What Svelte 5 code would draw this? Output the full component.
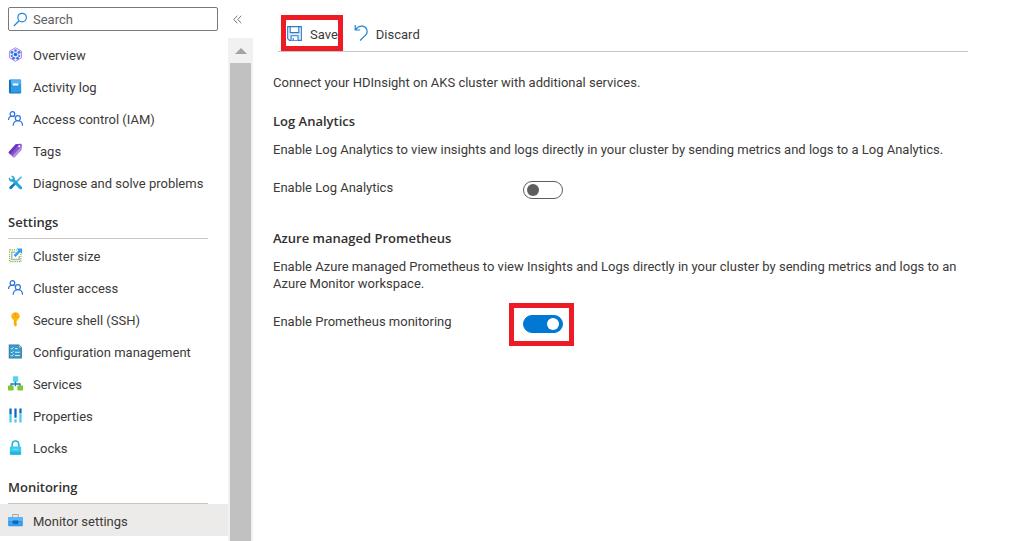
<script>
  const groups = [
    {
      title: '',
      items: [
        { label: 'Overview', icon: 'overview' },
        { label: 'Activity log', icon: 'log' },
        { label: 'Access control (IAM)', icon: 'people' },
        { label: 'Tags', icon: 'tag' },
        { label: 'Diagnose and solve problems', icon: 'tools' },
      ],
    },
    {
      title: 'Settings',
      items: [
        { label: 'Cluster size', icon: 'resize' },
        { label: 'Cluster access', icon: 'people' },
        { label: 'Secure shell (SSH)', icon: 'key' },
        { label: 'Configuration management', icon: 'config' },
        { label: 'Services', icon: 'services' },
        { label: 'Properties', icon: 'properties' },
        { label: 'Locks', icon: 'lock' },
      ],
    },
    {
      title: 'Monitoring',
      items: [{ label: 'Monitor settings', icon: 'toolbox' }],
    },
  ];

  let selected = $state('Monitor settings');
  let query = $state('');
  let logAnalytics = $state(false);
  let prometheus = $state(true);

  function select(e, label) {
    e.preventDefault();
    selected = label;
  }

  function discard() {
    logAnalytics = false;
    prometheus = true;
  }
</script>

{#snippet icon(name)}
  <svg class="icon" viewBox="0 0 16 16" aria-hidden="true">
    {#if name === 'overview'}
      <path d="M8 .8 14.3 4.4v7.2L8 15.2 1.7 11.6V4.4z" fill="#f3eefe" stroke="#a67af4" />
      <path d="M8 4.5 5 6l-.5 4L8 12l3.5-2L11 6z" fill="none" stroke="#8fc3f5" />
      <circle cx="8" cy="8" r="1.9" fill="#1b6fe0" />
      <circle cx="8" cy="3.6" r="1.3" fill="#8a4fe8" />
      <circle cx="4.2" cy="5.8" r="1.5" fill="#1b86e8" />
      <circle cx="11.8" cy="5.8" r="1.5" fill="#1b86e8" />
      <circle cx="4" cy="9.5" r="1.1" fill="#8a4fe8" />
      <circle cx="12" cy="9.5" r="1.1" fill="#8a4fe8" />
      <circle cx="5.8" cy="12" r="1.3" fill="#1b6fe0" />
      <circle cx="10.2" cy="12" r="1.3" fill="#1b6fe0" />
    {:else if name === 'log'}
      <path d="M3 .5h10a1 1 0 0 1 1 1v13a1 1 0 0 1-1 1H2.5A1.5 1.5 0 0 1 1 14V2A1.5 1.5 0 0 1 2.5.5z" fill="#1673bd" />
      <path d="M3.2 1.2H13a.8.8 0 0 1 .8.8v11.5a.8.8 0 0 1-.8.8H3.200z" fill="#2f9ae6" />
      <path d="M3.2 1.2h10.6v4H3.200z" fill="#58b4f2" />
      <rect x="5" y="4.8" width="6" height="2.2" rx=".4" fill="#fff" />
    {:else if name === 'people'}
      <g fill="none" stroke="#2b74e2" stroke-width="1.3">
        <circle cx="4.7" cy="3.2" r="2.5" />
        <path d="M.6 9.5c0-2.400 1.600-3.900 4-3.900 1 0 1.800.2 2.400.7" />
        <circle cx="10.5" cy="7.700" r="2.7" />
        <path d="M5.500 15.600c0-3.200 2-5.200 5-5.200s5 2 5 5.200" />
      </g>
    {:else if name === 'tag'}
      <path d="M8.300 1.200 13.500.7c.7 0 1.200.5 1.200 1.200l-.3 5.300-7.100 7.700c-.6.6-1.400.6-2 .1l-4.100-4c-.6-.6-.6-1.400 0-2z" fill="#8a55d0" />
      <path d="m8.300 1.200-7.100 7.800c-.6.6-.6 1.400 0 2l1.300 1.200L12 1z" fill="#6c36bd" />
      <path d="m4.500 14 9.500-10 .4 3.200-7.100 7.700c-.6.6-1.400.6-2 .1z" fill="#b493e4" />
      <circle cx="12" cy="3.500" r="1.1" fill="#fff" />
    {:else if name === 'tools'}
      <path d="M13.800 1.300 15 2.500l-5.600 5.900-1.700-1.600z" fill="#4bb9ed" />
      <path d="m7.500 7.400 1.700 1.700-5 5.400c-.7.8-1.700.8-2.400.1s-.6-1.700.1-2.300z" fill="#1377bb" />
      <path d="M1 2.500 3.200 4.700l1.500-.4.400-1.500L3 .9c1.900-.6 4.200.4 4.300 3l-.2 1 7.500 7.700c1.400 1.600-.6 3.600-2.200 2.200L5 7.100C2.300 7.900.2 5.200 1 2.500z" fill="#21a7d8" />
    {:else if name === 'resize'}
      <path d="M1.700 2h12v12.500h-12z" fill="none" stroke="#83bd35" stroke-width="1.3" stroke-dasharray="1.3 1" />
      <path d="M8 4.500H4v7.800h8V8.500" fill="none" stroke="#b5b5b5" stroke-width="1.5" />
      <path d="M8 .5h7.500v7.300z" fill="#fff" />
      <path d="M9.200.6H15v5.900l-2-1.900-5 5-2-2 5-5z" fill="#36a1e8" />
    {:else if name === 'key'}
      <path d="M8 .3c2.700 0 4.500 1.800 4.500 4.200 0 1.900-1 3.200-2.700 3.900v1.200L8.700 10.700l1.100 1-.9.900.9.900L8 15.700l-1.800-1.800V8.400C4.500 7.700 3.500 6.400 3.500 4.500 3.500 2.100 5.300.3 8 .3z" fill="#fdb813" />
      <circle cx="8" cy="2.5" r="1" fill="#d99000" />
      <path d="M5.300 5.300h5.400" stroke="#f59b0a" />
      <path d="M7.400 8.500v5.300" stroke="#f0a000" />
    {:else if name === 'config'}
      <path d="M.8.500h11l3 3v12H.8z" fill="#38759a" />
      <path d="M1.600 1.300h9.600v3h2.800v10.400H1.600z" fill="#3a9bcb" />
      <path d="M11.500.8v3.300h3" fill="#a4d1e8" />
      <path d="m3 4.500 1 1 2-2M3 8.500l1 1 2-2M3 12l1 1 2-2M7.500 5h3M7.500 8.800h5M7.500 12.300h5" stroke="#e3f6fd" fill="none" />
    {:else if name === 'services'}
      <path d="M8 5v4M3.200 11V8.500h9.600V11" stroke="#1480ca" stroke-width="1.4" fill="none" />
      <rect x="5.3" y=".3" width="5.6" height="5.7" rx=".5" fill="#55d3f5" />
      <rect x="0" y="10" width="6" height="5.5" rx=".5" fill="#7fc92d" />
      <rect x="10" y="10" width="6" height="5.5" rx=".5" fill="#7fc92d" />
      <path d="M7.300 6h1.400v5H7.300z" fill="#1480ca" />
    {:else if name === 'properties'}
      <path d="M1.500.5h2.400v6H1.500zM6.800.5h2.400v10H6.800zM12.100.5h2.400v5h-2.400z" fill="#1265bd" />
      <path d="M1.500 6.500h2.400v9H1.500zM6.800 12h2.400v3.500H6.800zM12.100 5.500h2.400v10h-2.400z" fill="#50c7ee" />
    {:else if name === 'lock'}
      <path d="M4.500 8V4.700C4.500 2.400 5.900 1 8 1s3.500 1.400 3.500 3.700V8" fill="none" stroke="#29b3dc" stroke-width="1.7" />
      <rect x="2" y="7" width="12" height="8.6" rx="1" fill="#35cdef" />
      <path d="M2 12.500h12v2.100a1 1 0 0 1-1 1H3a1 1 0 0 1-1-1z" fill="#25b5dc" />
      <path d="M5 10h6" stroke="#80e5fa" />
    {:else if name === 'toolbox'}
      <path d="M5 5V2.500c0-.6.300-.9.900-.9h4.200c.6 0 .9.300.9.900V5" fill="none" stroke="#a3a3a3" stroke-width="1.100" />
      <path d="M1 4.200h14a.8.800 0 0 1 .8.800v8.200a.8.800 0 0 1-.8.800H1a.8.800 0 0 1-.8-.8V5a.8.800 0 0 1 .8-.8z" fill="#2f9af0" />
      <path d="M.2 5a.8.800 0 0 1 .8-.8h14a.8.800 0 0 1 .8.800v3.500H.2z" fill="#5ab4f7" />
      <path d="M5 8h6v3.500H5z" fill="#0d65b8" />
      <path d="M2 11.500h2.500M11.500 11.500H14" stroke="#63bbf8" />
    {/if}
  </svg>
{/snippet}

<div class="page">
  <aside>
    <div class="search-row">
      <label class="search">
        <svg class="icon" viewBox="0 0 14 14" aria-hidden="true">
          <circle cx="8.5" cy="5.2" r="4" fill="none" stroke="#1a86d8" stroke-width="1.1" />
          <path d="M5.600 8.200.8 13.200" stroke="#1a86d8" stroke-width="1.2" />
        </svg>
        <input type="text" placeholder="Search" aria-label="Search" bind:value={query} />
      </label>
      <button class="collapse" aria-label="Collapse menu">
        <svg viewBox="0 0 9 9" aria-hidden="true">
          <path d="M4.300.7.800 4.500l3.500 3.800M8.300.7 4.800 4.500l3.500 3.800" fill="none" stroke="#777" />
        </svg>
      </button>
    </div>

    <div class="menu">
      <nav>
        {#each groups as g (g.title)}
          {#if g.title}
            <h3>{g.title}</h3>
          {/if}
          <ul>
            {#each g.items as item (item.label)}
              <li>
                <a href="#blade" class:active={selected === item.label} onclick={(e) => select(e, item.label)}>
                  {@render icon(item.icon)}
                  <span class="text">{item.label}</span>
                </a>
              </li>
            {/each}
          </ul>
        {/each}
      </nav>
      <div class="scrollbar">
        <div class="arrow"></div>
        <div class="thumb"></div>
      </div>
    </div>
  </aside>

  <main>
    <div class="toolbar">
      <button class="boxed">
        <svg class="icon" viewBox="0 0 14 14" aria-hidden="true">
          <path d="M.6.600h12.800v12.800H2.300L.6 11.700z" fill="#e3effa" stroke="#2a7bc8" />
          <path d="M3 .6h8v5.600H3zM3.800 13.400V9.100h6.500v4.300M5.800 13.200v-2" fill="#fff" stroke="#2a7bc8" />
        </svg>
        <span class="text">Save</span>
      </button>
      <button onclick={discard}>
        <svg class="undo" viewBox="0 0 14 18" aria-hidden="true">
          <path d="M1.200 1v5h5M1.400 5.800C3.500 3 6 1.800 8.500 2.200c4.500.8 6.100 6 2.900 9.200L6 16.500" fill="none" stroke="#2583d3" stroke-width="1.2" />
        </svg>
        <span class="text">Discard</span>
      </button>
    </div>

    <div class="content">
      <p>Connect your HDInsight on AKS cluster with additional services.</p>

      <section>
        <h2>Log Analytics</h2>
        <p>Enable Log Analytics to view insights and logs directly in your cluster by sending metrics and logs to a Log Analytics.</p>
        <div class="field">
          <label for="log-analytics">Enable Log Analytics</label>
          <span class="switch">
            <input id="log-analytics" type="checkbox" role="switch" bind:checked={logAnalytics} />
          </span>
        </div>
      </section>

      <section>
        <h2>Azure managed Prometheus</h2>
        <p>Enable Azure managed Prometheus to view Insights and Logs directly in your cluster by sending metrics and logs to an Azure Monitor workspace.</p>
        <div class="field">
          <label for="prometheus">Enable Prometheus monitoring</label>
          <span class="switch marked">
            <input id="prometheus" type="checkbox" role="switch" bind:checked={prometheus} />
          </span>
        </div>
      </section>
    </div>
  </main>
</div>

<style>
  :global(body) { margin: 0; background: #fff; }

  .page {
    display: flex;
    min-height: 100vh;
    font: 13px/17px "Segoe UI", Roboto, sans-serif;
    color: #3b3a39;
  }

  button { font: inherit; color: inherit; background: none; border: 0; cursor: pointer; }
  .icon { width: 15px; height: 15px; flex: none; }
  .text { padding-top: 2px; }

  aside { display: flex; flex-direction: column; flex: 0 0 253px; }
  .search-row { display: flex; align-items: center; height: 24px; padding: 7px 8px; }
  .search {
    display: flex;
    align-items: center;
    gap: 5px;
    flex: 1;
    height: 22px;
    padding-left: 4px;
    border: 1px solid #7a7977;
    border-radius: 2px;
  }
  .search input {
    flex: 1;
    min-width: 0;
    padding: 0;
    border: 0;
    outline: 0;
    font: inherit;
    background: none;
  }
  .search input::placeholder { color: #605e5c; opacity: 1; }
  .collapse { display: flex; padding: 8px 3px 8px 15px; }
  .collapse svg { width: 9px; height: 9px; }

  .menu { display: flex; flex: 1; }
  nav { flex: 1; }
  nav ul { list-style: none; margin: 0; padding: 0; }
  nav a {
    display: flex;
    align-items: center;
    gap: 10px;
    height: 32px;
    padding-left: 8px;
    color: inherit;
    text-decoration: none;
    white-space: nowrap;
  }
  nav a:hover { background: #f3f2f1; }
  nav a.active { background: #edebe9; }
  nav h3 {
    margin: 0 20px 0 8px;
    padding: 16px 0 7px;
    border-bottom: 1px solid #c8c6c4;
  }
  h2, h3 {
    font: 600 13px/17px "Segoe UI", "Open Sans", sans-serif;
    color: #323130;
  }

  .scrollbar {
    display: flex;
    flex-direction: column;
    align-items: center;
    width: 25px;
    background: #f1f1f1;
  }
  .arrow {
    margin: 10px 0 9px;
    border: 6px solid transparent;
    border-top: 0;
    border-bottom-color: #a3a3a3;
  }
  .thumb { flex: 1; width: 21px; background: #c1c1c1; }

  main { flex: 1; padding: 15px 47px 0 20px; }
  .toolbar {
    display: flex;
    gap: 11px;
    margin-left: 5px;
    padding-left: 3px;
    border-bottom: 1px solid #c8c6c4;
  }
  .toolbar button { display: flex; align-items: center; gap: 8px; padding: 0; }
  .toolbar .boxed { height: 36px; padding-left: 1px; border: 5px solid #ed1c24; }
  .undo { width: 14px; height: 18px; }

  .content { padding-top: 22px; }
  p { margin: 0; }
  h2 { margin: 0 0 11px; }
  section { margin-top: 22px; }
  section + section { margin-top: 31px; }

  .field { display: flex; align-items: flex-start; margin-top: 21px; }
  .field label { width: 250px; }
  .switch { display: flex; position: relative; padding-top: 2px; }
  .switch input {
    appearance: none;
    display: flex;
    align-items: center;
    box-sizing: border-box;
    width: 40px;
    height: 18px;
    margin: 0;
    padding: 0 3px;
    border: 1px solid #605e5c;
    border-radius: 9px;
    cursor: pointer;
  }
  .switch input::before {
    content: "";
    width: 12px;
    height: 12px;
    border-radius: 50%;
    background: #605e5c;
  }
  .switch input:checked {
    justify-content: flex-end;
    background: #0078d4;
    border-color: #0078d4;
  }
  .switch input:checked::before { background: #fff; }

  .marked::after {
    content: "";
    position: absolute;
    inset: -10px -11px -13px -14px;
    border: 5px solid #ed1c24;
    pointer-events: none;
  }
</style>
